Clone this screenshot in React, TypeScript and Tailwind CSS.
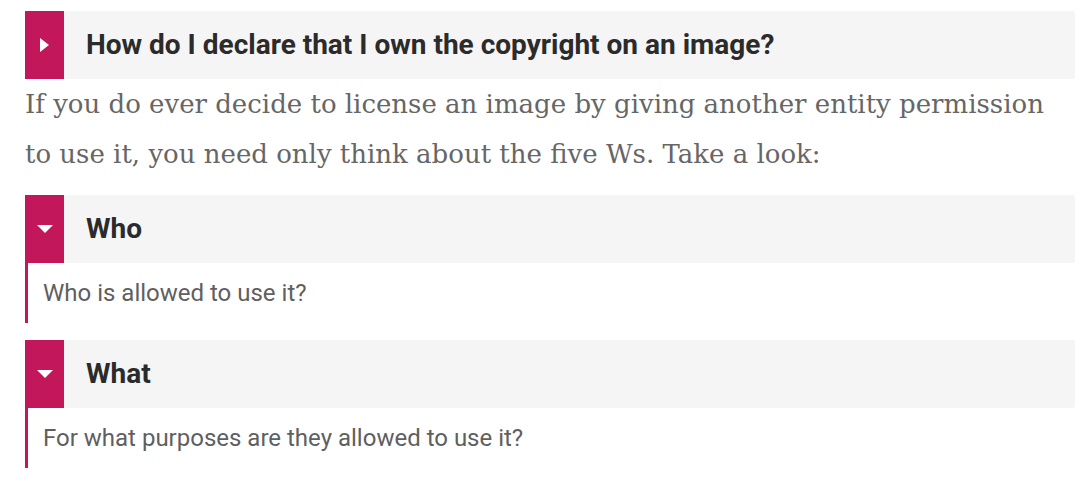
import React from "react";

const Right = () => (
  <svg width="9" height="14" viewBox="0 0 9 14"><path d="M0 0 L9 7 L0 14 Z" fill="#fff" /></svg>
);
const Down = () => (
  <svg width="16" height="8" viewBox="0 0 16 8"><path d="M0 0 L16 0 L8 8 Z" fill="#fff" /></svg>
);

function Header({ title, open }: { title: string; open?: boolean }) {
  return (
    <div className="flex h-[68px] bg-[#f5f5f5] rounded-r-[3px]">
      <div className="w-[39px] bg-[#c2185b] flex items-center justify-center shrink-0">
        {open ? <Down /> : <Right />}
      </div>
      <div className="flex items-center pl-[22px] text-[28px] font-bold text-[#2b2b2b]" style={{ fontFamily: "Roboto, sans-serif" }}>
        {title}
      </div>
    </div>
  );
}

function Item({ title, body }: { title: string; body: string }) {
  return (
    <div>
      <Header title={title} open />
      <div className="border-l-[3px] border-[#c2185b] h-[60px] flex items-center pl-[15px] text-[24px] text-[#5f5f5f]" style={{ fontFamily: "Roboto, sans-serif" }}>
        {body}
      </div>
    </div>
  );
}

export default function App() {
  return (
    <div className="bg-white w-[1090px] h-[487px] pt-[11px] pl-[25px] pr-[15px]">
      <Header title="How do I declare that I own the copyright on an image?" />
      <p className="text-[26px] leading-[50px] text-[#666] mb-[16px]" style={{ fontFamily: '"DejaVu Serif", serif' }}>
        If you do ever decide to license an image by giving another entity permission to use it, you need only think about the five Ws. Take a look:
      </p>
      <Item title="Who" body="Who is allowed to use it?" />
      <div className="h-[17px]" />
      <Item title="What" body="For what purposes are they allowed to use it?" />
    </div>
  );
}
